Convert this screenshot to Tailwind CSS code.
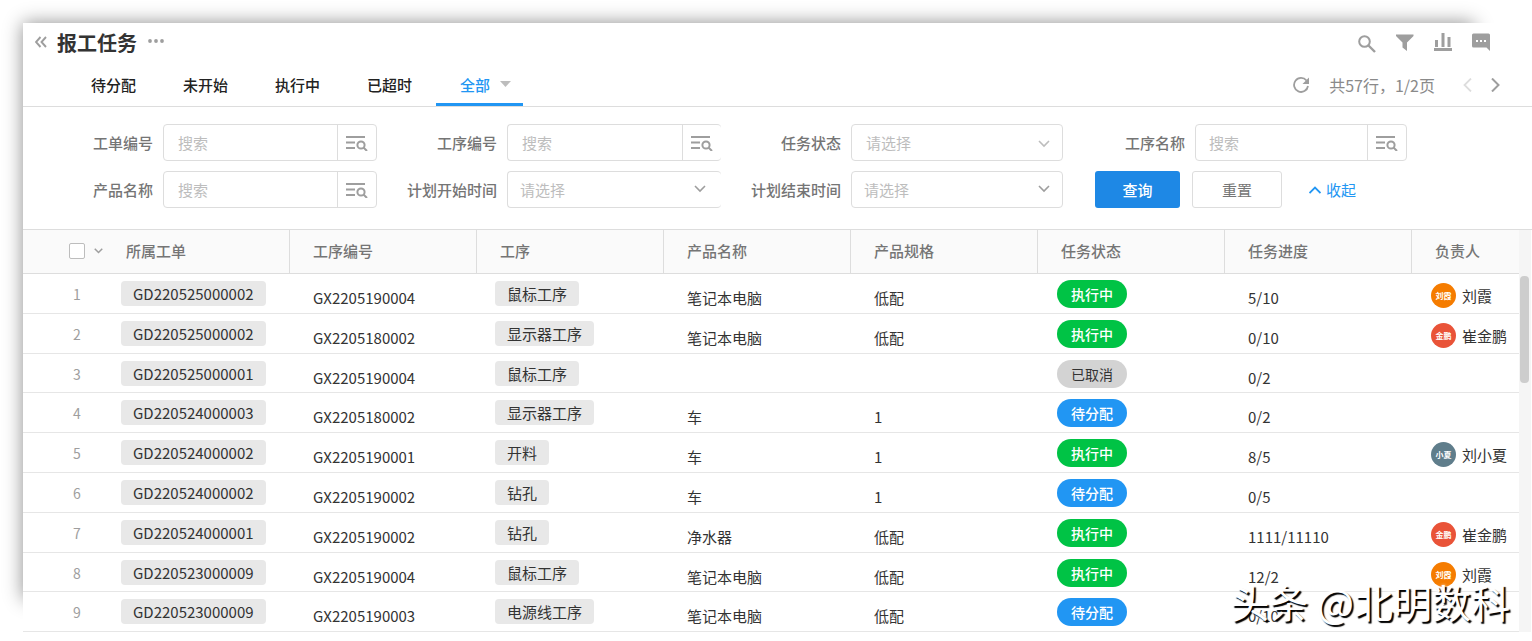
<!DOCTYPE html>
<html lang="zh-CN">
<head>
<meta charset="utf-8">
<title>报工任务</title>
<script src="https://cdn.jsdelivr.net/npm/@tailwindcss/browser@4"></script>
</head>
<body class="bg-white font-['Noto_Sans_CJK_SC','Noto_Sans',sans-serif] text-[15px] leading-6 text-[#333]">
<svg class="hidden">
  <symbol id="i-adv" viewBox="0 0 22 16"><path d="M0 2h19M0 7.500h9M0 13h9" fill="none" stroke="#9e9e9e" stroke-width="2"/><circle cx="15" cy="10" r="3.600" fill="none" stroke="#9e9e9e" stroke-width="2"/><path d="M17.500 12.500l3.500 3.500" stroke="#9e9e9e" stroke-width="2"/></symbol>
  <symbol id="i-down" viewBox="0 0 12 8"><path d="M1 1l5 5 5-5" fill="none" stroke="currentColor" stroke-width="1.600"/></symbol>
</svg>
<div class="relative pl-[23px] pt-[23px]">
  <div class="absolute top-[23px] left-[23px] right-[58px] bottom-[42px] shadow-[0_0_18px_rgba(0,0,0,0.45)]"></div>
  <main class="relative bg-white">
    <header class="flex h-[40px] items-center pl-[12px] pr-[42px]">
      <button aria-label="收起侧栏" class="pb-[2px]"><svg class="h-[12px] w-[12px]" viewBox="0 0 12 12"><path d="M5.500 1L1 6l4.500 5M11 1L6.500 6 11 11" fill="none" stroke="#9e9e9e" stroke-width="1.900"/></svg></button>
      <h1 class="ml-[10px] text-[20px] font-bold">报工任务</h1>
      <button aria-label="更多" class="ml-[11px] pb-[4px]"><svg class="h-[4px] w-[16px]" viewBox="0 0 16 4" fill="#9e9e9e"><circle cx="2" cy="2" r="1.900"/><circle cx="8" cy="2" r="1.900"/><circle cx="14" cy="2" r="1.900"/></svg></button>
      <div class="ml-auto flex items-center gap-[20px]">
        <button aria-label="搜索"><svg class="h-[20px] w-[18px]" viewBox="0 0 18 20"><circle cx="6.500" cy="8.500" r="5.300" fill="none" stroke="#9e9e9e" stroke-width="2"/><path d="M10.500 12.500l6.500 6.500" stroke="#9e9e9e" stroke-width="2.400"/></svg></button>
        <button aria-label="筛选"><svg class="h-[20px] w-[18px]" viewBox="0 0 18 20"><path d="M0 1.500h17.500v1.500l-6.500 6.500v8.500l-4.500-3.500v-5L0 3z" fill="#9e9e9e"/></svg></button>
        <button aria-label="统计"><svg class="h-[20px] w-[18px]" viewBox="0 0 18 20" fill="#9e9e9e"><path d="M0 15h18v3H0zM1 7h3v7H1zM7.500 0h3v14h-3zM13.500 4h3v10h-3z"/></svg></button>
        <button aria-label="讨论"><svg class="h-[20px] w-[18px]" viewBox="0 0 18 20"><path d="M1.500 0.500h15q1.500 0 1.500 1.500v16l-3.500-3.500h-13Q0 14.500 0 13V2Q0 .5 1.500.5z" fill="#9e9e9e"/><path d="M4 7h2v2H4zM8 7h2v2H8zM12 7h2v2h-2z" fill="#fff"/></svg></button>
      </div>
    </header>
    <div class="flex h-[44px] items-center border-b border-[#ddd] pl-[45px] pr-[32px]">
      <nav class="flex h-full gap-px self-stretch font-medium">
        <button class="px-[23px] text-[#222]">待分配</button>
        <button class="px-[23px] text-[#222]">未开始</button>
        <button class="px-[23px] text-[#222]">执行中</button>
        <button class="px-[23px] text-[#222]">已超时</button>
        <button class="flex items-center gap-[10px] border-b-3 border-[#2196f3] pt-[4px] pr-[12px] pl-[24px] text-[#2196f3]">全部 <svg class="mb-[2px] h-[6px] w-[11px]" viewBox="0 0 11 6"><path d="M0 0h11L5.500 6z" fill="#bdbdbd"/></svg></button>
      </nav>
      <div class="ml-auto flex items-center text-[16px] text-[#8a8a8a]">
        <button aria-label="刷新"><svg class="h-[16px] w-[16px]" viewBox="0 0 16 16"><path d="M13.500 3.500A7 7 0 1 0 15 9" fill="none" stroke="#9e9e9e" stroke-width="1.800"/><path d="M16 .5v6.500H9.500z" fill="#9e9e9e"/></svg></button>
        <span class="ml-[20px]">共57行，1/2页</span>
        <button aria-label="上一页" class="ml-[28px] text-[#ddd]"><svg class="h-[14px] w-[9px]" viewBox="0 0 9 14"><path d="M8 .5L1.500 7 8 13.500" fill="none" stroke="currentColor" stroke-width="1.800"/></svg></button>
        <button aria-label="下一页" class="ml-[19px]"><svg class="h-[14px] w-[9px]" viewBox="0 0 9 14"><path d="M1 .5L7.500 7 1 13.500" fill="none" stroke="#9e9e9e" stroke-width="2"/></svg></button>
      </div>
    </div>
    <form class="grid grid-cols-4 gap-y-[10px] pt-[17px] pr-[123px] pb-[21px] pl-[10px] text-[#757575]">
      <div class="flex items-center gap-[10px]"><label for="f1" class="w-[120px] text-right font-medium">工单编号</label><div class="flex h-[37px] min-w-0 flex-1 rounded border border-[#ddd]"><input id="f1" placeholder="搜索" class="min-w-0 flex-1 pl-[14px] placeholder:text-[#bdbdbd]"><button type="button" aria-label="高级搜索" class="flex w-[39px] items-center justify-center border-l border-[#ddd]"><svg class="h-[16px] w-[22px]"><use href="#i-adv"/></svg></button></div></div>
      <div class="flex items-center gap-[10px]"><label for="f2" class="w-[120px] text-right font-medium">工序编号</label><div class="flex h-[37px] min-w-0 flex-1 rounded border border-r-0 border-[#ddd]"><input id="f2" placeholder="搜索" class="min-w-0 flex-1 pl-[14px] placeholder:text-[#bdbdbd]"><button type="button" aria-label="高级搜索" class="flex w-[39px] items-center justify-center border-l border-[#ddd]"><svg class="h-[16px] w-[22px]"><use href="#i-adv"/></svg></button></div></div>
      <div class="flex items-center gap-[10px] pr-[2px]"><label for="f3" class="w-[120px] text-right font-medium">任务状态</label><div class="relative min-w-0 flex-1"><select id="f3" class="h-[37px] w-full appearance-none rounded border border-[#ddd] pl-[14px] text-[#bdbdbd]"><option>请选择</option></select><svg class="pointer-events-none absolute top-[16px] right-[13px] h-[8px] w-[12px] text-[#bdbdbd]"><use href="#i-down"/></svg></div></div>
      <div class="flex items-center gap-[10px] pr-[2px]"><label for="f4" class="w-[120px] text-right font-medium">工序名称</label><div class="flex h-[37px] min-w-0 flex-1 rounded border border-[#ddd]"><input id="f4" placeholder="搜索" class="min-w-0 flex-1 pl-[13px] placeholder:text-[#bdbdbd]"><button type="button" aria-label="高级搜索" class="flex w-[39px] items-center justify-center border-l border-[#ddd]"><svg class="h-[16px] w-[22px]"><use href="#i-adv"/></svg></button></div></div>
      <div class="flex items-center gap-[10px]"><label for="f5" class="w-[120px] text-right font-medium">产品名称</label><div class="flex h-[37px] min-w-0 flex-1 rounded border border-[#ddd]"><input id="f5" placeholder="搜索" class="min-w-0 flex-1 pl-[14px] placeholder:text-[#bdbdbd]"><button type="button" aria-label="高级搜索" class="flex w-[39px] items-center justify-center border-l border-[#ddd]"><svg class="h-[16px] w-[22px]"><use href="#i-adv"/></svg></button></div></div>
      <div class="flex items-center gap-[10px]"><label for="f6" class="w-[120px] text-right font-medium">计划开始时间</label><div class="relative min-w-0 flex-1"><select id="f6" class="h-[37px] w-full appearance-none rounded border border-r-0 border-[#ddd] pl-[12px] text-[#bdbdbd]"><option>请选择</option></select><svg class="pointer-events-none absolute top-[14px] right-[15px] h-[8px] w-[12px] text-[#9e9e9e]"><use href="#i-down"/></svg></div></div>
      <div class="flex items-center gap-[10px] pr-[2px]"><label for="f7" class="w-[120px] text-right font-medium">计划结束时间</label><div class="relative min-w-0 flex-1"><select id="f7" class="h-[37px] w-full appearance-none rounded border border-[#ddd] pl-[12px] text-[#bdbdbd]"><option>请选择</option></select><svg class="pointer-events-none absolute top-[14px] right-[13px] h-[8px] w-[12px] text-[#9e9e9e]"><use href="#i-down"/></svg></div></div>
      <div class="flex items-center pl-[30px]"><button type="button" class="h-[37px] w-[85px] rounded-[3px] bg-[#1e88e5] font-medium text-white">查询</button><button type="button" class="ml-[12px] h-[37px] w-[90px] rounded-[3px] border border-[#ddd]">重置</button><button type="button" class="ml-[27px] flex items-center gap-[5px] text-[#2196f3]"><svg class="h-[8px] w-[12px]" viewBox="0 0 12 8"><path d="M.5 7L6 1.500 11.500 7" fill="none" stroke="currentColor" stroke-width="1.800"/></svg>收起</button></div>
    </form>
    <div class="flex border-t border-[#ddd]">
      <table class="w-full min-w-0 flex-1 table-fixed border-separate border-spacing-0">
        <colgroup><col class="w-[80px]"><col class="w-[187px]"><col class="w-[187px]"><col class="w-[187px]"><col class="w-[187px]"><col class="w-[187px]"><col class="w-[187px]"><col class="w-[187px]"><col></colgroup>
        <thead class="bg-[#fafafa] text-left text-[#757575]">
          <tr class="h-[44px]">
            <th class="border-b border-[#ddd] pb-[2px] pl-[46px]"><span class="flex items-center gap-[9px]"><input type="checkbox" aria-label="全选" class="h-[16px] w-[16px] shrink-0 appearance-none rounded-[2px] border border-[#bdbdbd] bg-white"><svg class="h-[6px] w-[9px] shrink-0 text-[#9e9e9e]" viewBox="0 0 12 8"><path d="M1 1l5 5 5-5" fill="none" stroke="currentColor" stroke-width="2"/></svg></span></th>
            <th class="border-r border-b border-[#ddd] pb-[2px] pl-[23px] font-medium">所属工单</th>
            <th class="border-r border-b border-[#ddd] pb-[2px] pl-[23px] font-medium">工序编号</th>
            <th class="border-r border-b border-[#ddd] pb-[2px] pl-[23px] font-medium">工序</th>
            <th class="border-r border-b border-[#ddd] pb-[2px] pl-[23px] font-medium">产品名称</th>
            <th class="border-r border-b border-[#ddd] pb-[2px] pl-[23px] font-medium">产品规格</th>
            <th class="border-r border-b border-[#ddd] pb-[2px] pl-[23px] font-medium">任务状态</th>
            <th class="border-r border-b border-[#ddd] pb-[2px] pl-[23px] font-medium">任务进度</th>
            <th class="border-b border-[#ddd] pb-[2px] pl-[23px] font-medium">负责人</th>
          </tr>
        </thead>
        <tbody id="rows"></tbody>
      </table>
      <div class="w-[12px] bg-[#f5f5f5] px-px pt-[46px]"><div class="h-[107px] w-[9px] rounded bg-[#cdcdcd]"></div></div>
      <div class="w-px"></div>
    </div>
    <div class="h-[9px]"></div>
  </main>
  <div class="pointer-events-none absolute right-[22px] bottom-[18px] text-[39px] leading-[44px] whitespace-nowrap text-white [text-shadow:2px_2px_1px_#000,0_0_3px_#fff]">头条 @北明数科</div>
</div>
<script>
const states = {
  '执行中': 'bg-[#00c345] font-medium text-white',
  '待分配': 'bg-[#2196f3] font-medium text-white',
  '已取消': 'bg-[#d3d3d3] text-[#333]'
};
const people = {
  '刘霞': ['刘霞', 'bg-[#f57c00]'],
  '崔金鹏': ['金鹏', 'bg-[#e95338]'],
  '刘小夏': ['小夏', 'bg-[#5f7d8b]']
};
const data = [
  ['GD220525000002', 'GX2205190004', '鼠标工序', '笔记本电脑', '低配', '执行中', '5/10', '刘霞'],
  ['GD220525000002', 'GX2205180002', '显示器工序', '笔记本电脑', '低配', '执行中', '0/10', '崔金鹏'],
  ['GD220525000001', 'GX2205190004', '鼠标工序', '', '', '已取消', '0/2', ''],
  ['GD220524000003', 'GX2205180002', '显示器工序', '车', '1', '待分配', '0/2', ''],
  ['GD220524000002', 'GX2205190001', '开料', '车', '1', '执行中', '8/5', '刘小夏'],
  ['GD220524000002', 'GX2205190002', '钻孔', '车', '1', '待分配', '0/5', ''],
  ['GD220524000001', 'GX2205190002', '钻孔', '净水器', '低配', '执行中', '1111/11110', '崔金鹏'],
  ['GD220523000009', 'GX2205190004', '鼠标工序', '笔记本电脑', '低配', '执行中', '12/2', '刘霞'],
  ['GD220523000009', 'GX2205190003', '电源线工序', '笔记本电脑', '低配', '待分配', '0/10', '']
];
const plain = t => `<td class="border-b border-[#e6e6e6] pt-[12px] pl-[23px]">${t}</td>`;
const tag = t => `<td class="border-b border-[#e6e6e6] pt-[7px] pl-[18px]"><span class="block h-[25px] w-fit rounded bg-[#e8e8e8] px-[12px] leading-[26px]">${t}</span></td>`;
document.getElementById('rows').innerHTML = data.map((r, i) => {
  const p = people[r[7]];
  return `<tr class="align-top ${i === 2 || i === 7 ? 'h-[39px]' : 'h-[40px]'}">
    <td class="border-b border-[#e6e6e6] pt-[8px] pl-[50px] text-[14px] text-[#9e9e9e]">${i + 1}</td>
    ${tag(r[0])}${plain(r[1])}${tag(r[2])}${plain(r[3])}${plain(r[4])}
    <td class="border-b border-[#e6e6e6] pt-[6px] pl-[19px]"><span class="block h-[28px] w-[70px] rounded-full text-center text-[14px] leading-[28px] ${states[r[5]]}">${r[5]}</span></td>
    ${plain(r[6])}
    <td class="border-b border-[#e6e6e6] pt-[9px] pl-[19px]">${p ? `<span class="flex items-center gap-[6px] whitespace-nowrap"><span class="flex h-[25px] w-[25px] shrink-0 items-center justify-center rounded-full text-[8px] font-bold text-white ${p[1]}">${p[0]}</span>${r[7]}</span>` : ''}</td>
  </tr>`;
}).join('');
</script>
</body>
</html>
